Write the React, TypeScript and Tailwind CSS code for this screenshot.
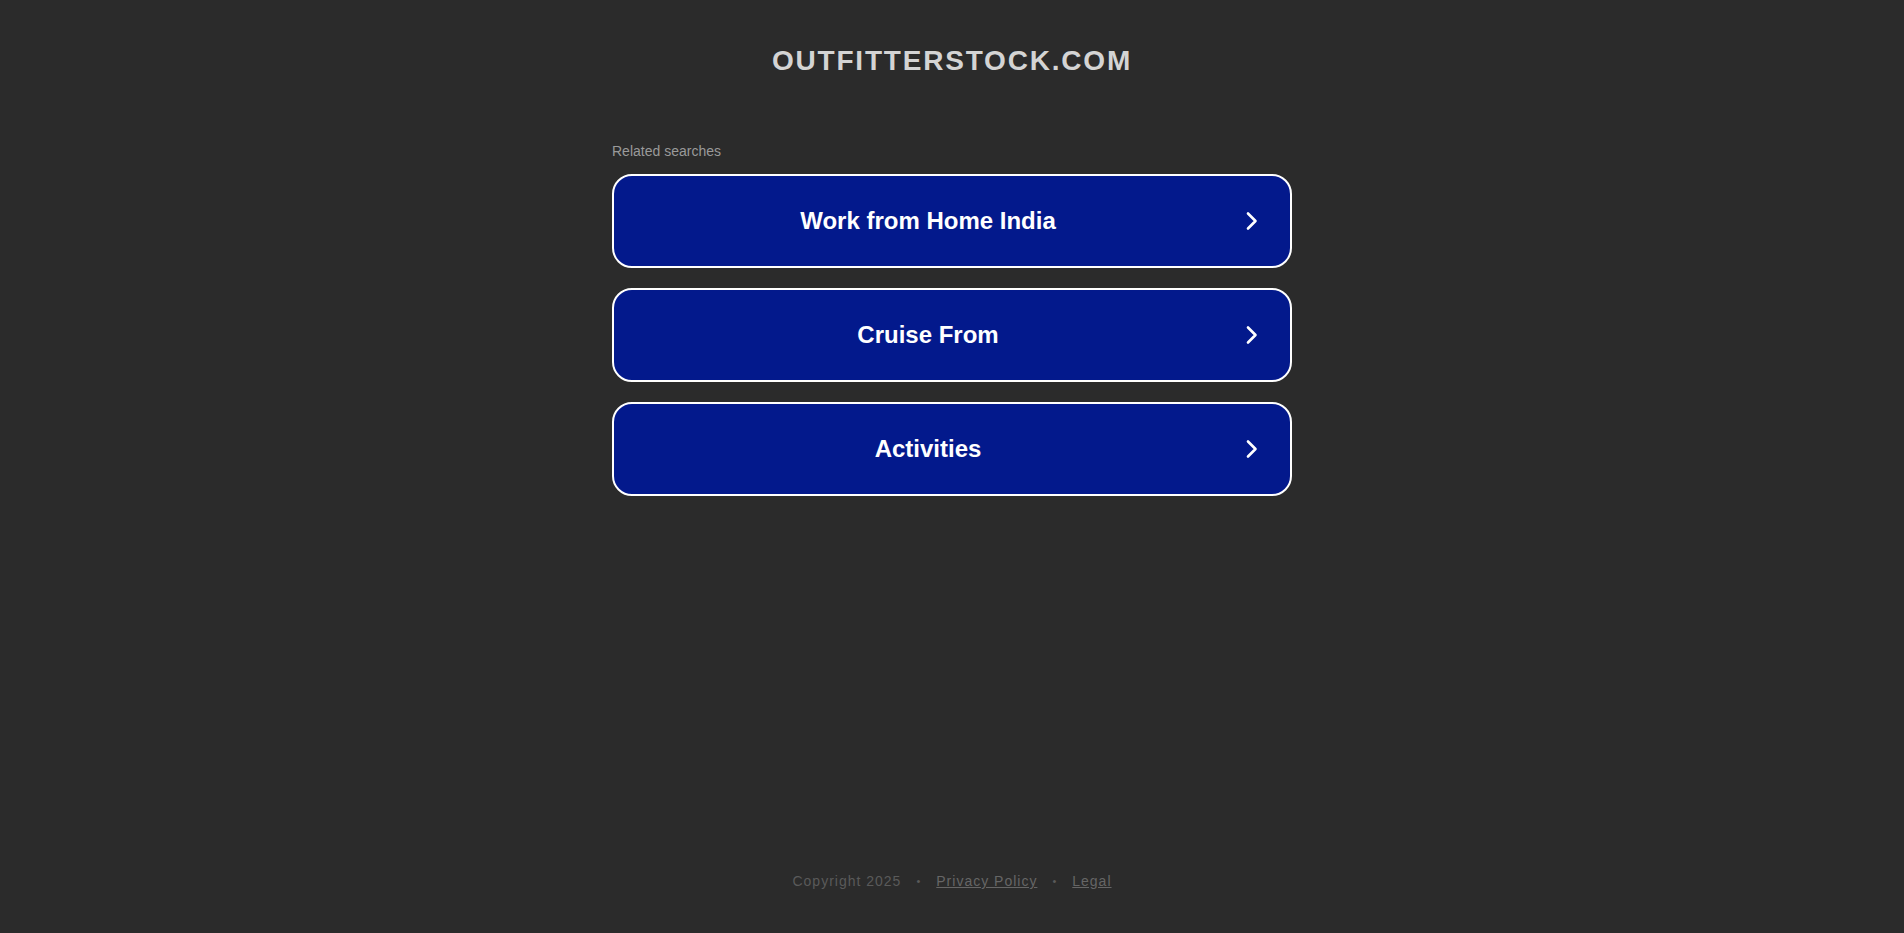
import React from 'react';

const searches = ['Work from Home India', 'Cruise From', 'Activities'];

const Chevron: React.FC = () => (
  <svg width="12" height="20" viewBox="0 0 12 20" fill="none" className="shrink-0">
    <path d="M2 2.5 L9.5 10 L2 17.5" stroke="#ffffff" strokeWidth="2.6" strokeLinecap="round" strokeLinejoin="round" />
  </svg>
);

const SearchLink: React.FC<{ label: string }> = ({ label }) => (
  <a
    href="#"
    className="flex items-center gap-1 h-[94px] border-2 border-white rounded-[20px] bg-[#03198c] pr-[32px] text-white no-underline"
  >
    <span className="flex-1 text-center text-[24px] leading-[28px] font-bold">{label}</span>
    <Chevron />
  </a>
);

export default function App() {
  return (
    <div className="min-h-screen flex flex-col bg-[#2b2b2b] font-['Liberation_Sans',Arial,sans-serif]">
      <header className="mt-[47px] text-center">
        <h1 className="text-[28px] leading-[28px] font-bold tracking-[1.8px] text-[#d4d4d4]">
          OUTFITTERSTOCK.COM
        </h1>
      </header>

      <main className="w-[680px] mx-auto mt-[69px]">
        <p className="text-[14px] leading-[14px] text-[#9a9a9a]">Related searches</p>
        <div className="mt-4 flex flex-col gap-[20px]">
          {searches.map((s) => (
            <SearchLink key={s} label={s} />
          ))}
        </div>
      </main>

      <footer className="mt-auto pb-[42px] flex justify-center items-center text-[14px] leading-[20px] tracking-[1px] text-[#5a5a5a]">
        <span>Copyright 2025</span>
        <span className="mx-[15px] text-[11px]">•</span>
        <a href="#" className="underline text-[#666]">Privacy Policy</a>
        <span className="mx-[15px] text-[11px]">•</span>
        <a href="#" className="underline text-[#666]">Legal</a>
      </footer>
    </div>
  );
}
